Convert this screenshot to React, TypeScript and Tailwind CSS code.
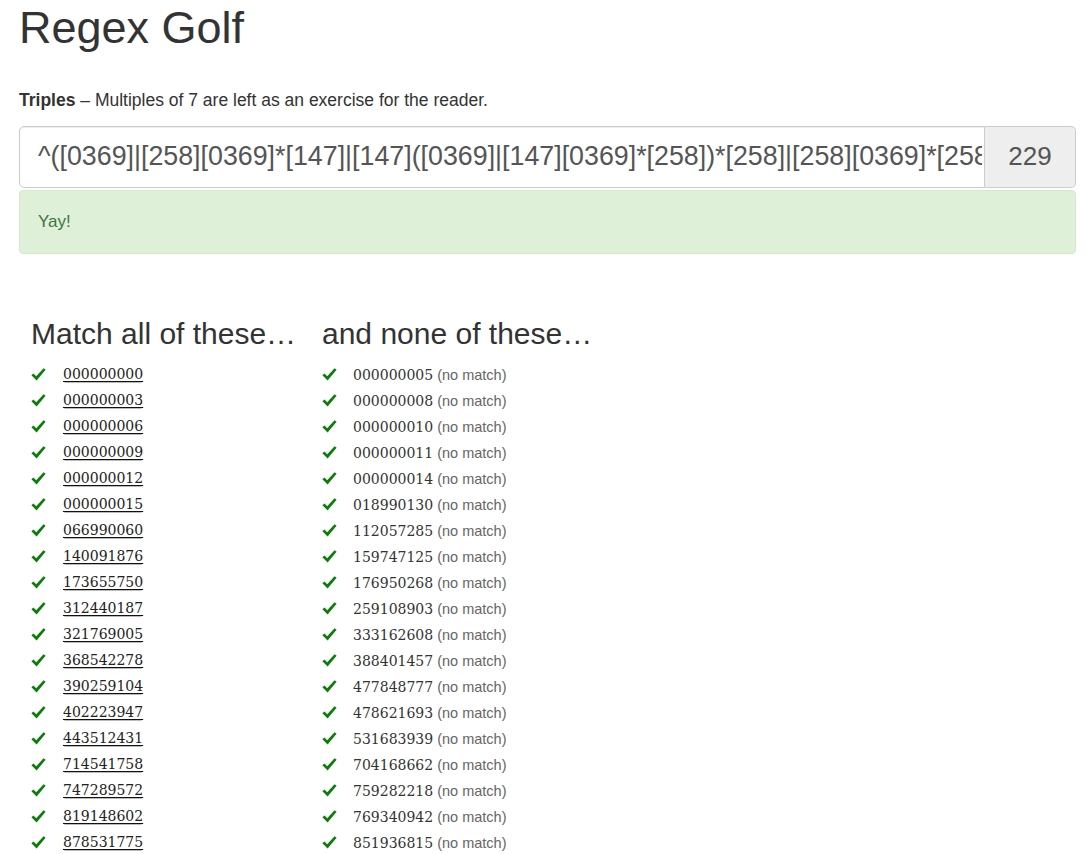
import React from "react";

const LEFT = [
  "000000000", "000000003", "000000006", "000000009", "000000012", "000000015",
  "066990060", "140091876", "173655750", "312440187", "321769005", "368542278",
  "390259104", "402223947", "443512431", "714541758", "747289572", "819148602",
  "878531775",
];
const RIGHT = [
  "000000005", "000000008", "000000010", "000000011", "000000014", "018990130",
  "112057285", "159747125", "176950268", "259108903", "333162608", "388401457",
  "477848777", "478621693", "531683939", "704168662", "759282218", "769340942",
  "851936815",
];

const REGEX =
  "^([0369]|[258][0369]*[147]|[147]([0369]|[147][0369]*[258])*[258]|[258][0369]*[258]([0369]|[258][0369]*[147])*[147])*$";

function Check() {
  return (
    <svg width="15" height="13" viewBox="0 0 15 13" className="block">
      <path d="M0.4 7.2 L2.5 5.5 L5.2 8.3 L12.6 0.3 L14.6 1.8 L5.6 12.4 Z" fill="#0a7d0a" />
    </svg>
  );
}

export default function App() {
  return (
    <div
      className="min-h-[854px] bg-white pl-[19px] pr-[15px] text-[#333]"
      style={{ fontFamily: '"Liberation Sans", Arial, sans-serif' }}
    >
      <h1 className="pt-[3px] text-[45px] leading-[1.1] font-normal">Regex Golf</h1>
      <p className="mt-[35px] text-[17.5px] leading-[24px]">
        <strong className="font-bold">Triples</strong> – Multiples of 7 are left as an exercise for the reader.
      </p>

      <div className="mt-[14px] flex h-[62px] w-full">
        <input
          readOnly
          value={REGEX}
          className="min-w-0 flex-1 rounded-l-[5px] border border-[#ccc] bg-white pl-[18px] pr-[2px] text-[26.8px] text-[#555] shadow-[inset_0_1px_1px_rgba(0,0,0,0.075)] outline-none"
          style={{ fontFamily: '"Liberation Sans", Arial, sans-serif' }}
        />
        <div className="flex w-[91px] items-center justify-center rounded-r-[5px] border border-l-0 border-[#ccc] bg-[#eee] text-[26px] text-[#555]">
          229
        </div>
      </div>

      <div className="mt-[2px] rounded-[4px] border border-[#d6e9c6] bg-[#dff0d8] px-[18px] py-[19px] text-[17px] leading-[24px] text-[#3c763d]">
        Yay!
      </div>

      <div className="mt-[63px] flex pl-[12px]">
        <div className="w-[291px]">
          <h2 className="text-[30px] leading-[33px] font-normal">Match all of these…</h2>
          <div className="mt-[12px]">
            {LEFT.map((n) => (
              <div key={n} className="flex h-[26px] items-center">
                <span className="flex w-[32px] items-center">
                  <Check />
                </span>
                <span
                  className="rounded-[3px] border-b border-[#bbb] text-[14px] leading-[16px] text-[#222] underline decoration-[#111] underline-offset-[2px]"
                  style={{ fontFamily: '"DejaVu Serif", serif' }}
                >
                  {n}
                </span>
              </div>
            ))}
          </div>
        </div>
        <div>
          <h2 className="text-[30px] leading-[33px] font-normal">and none of these…</h2>
          <div className="mt-[12px]">
            {RIGHT.map((n) => (
              <div key={n} className="flex h-[26px] items-center">
                <span className="flex w-[31px] items-center">
                  <Check />
                </span>
                <span
                  className="text-[14px] leading-[16px] text-[#333]"
                  style={{ fontFamily: '"DejaVu Serif", serif' }}
                >
                  {n}
                </span>
                <span className="ml-[4px] text-[14.5px] leading-[16px] text-[#666]">(no match)</span>
              </div>
            ))}
          </div>
        </div>
      </div>
    </div>
  );
}
